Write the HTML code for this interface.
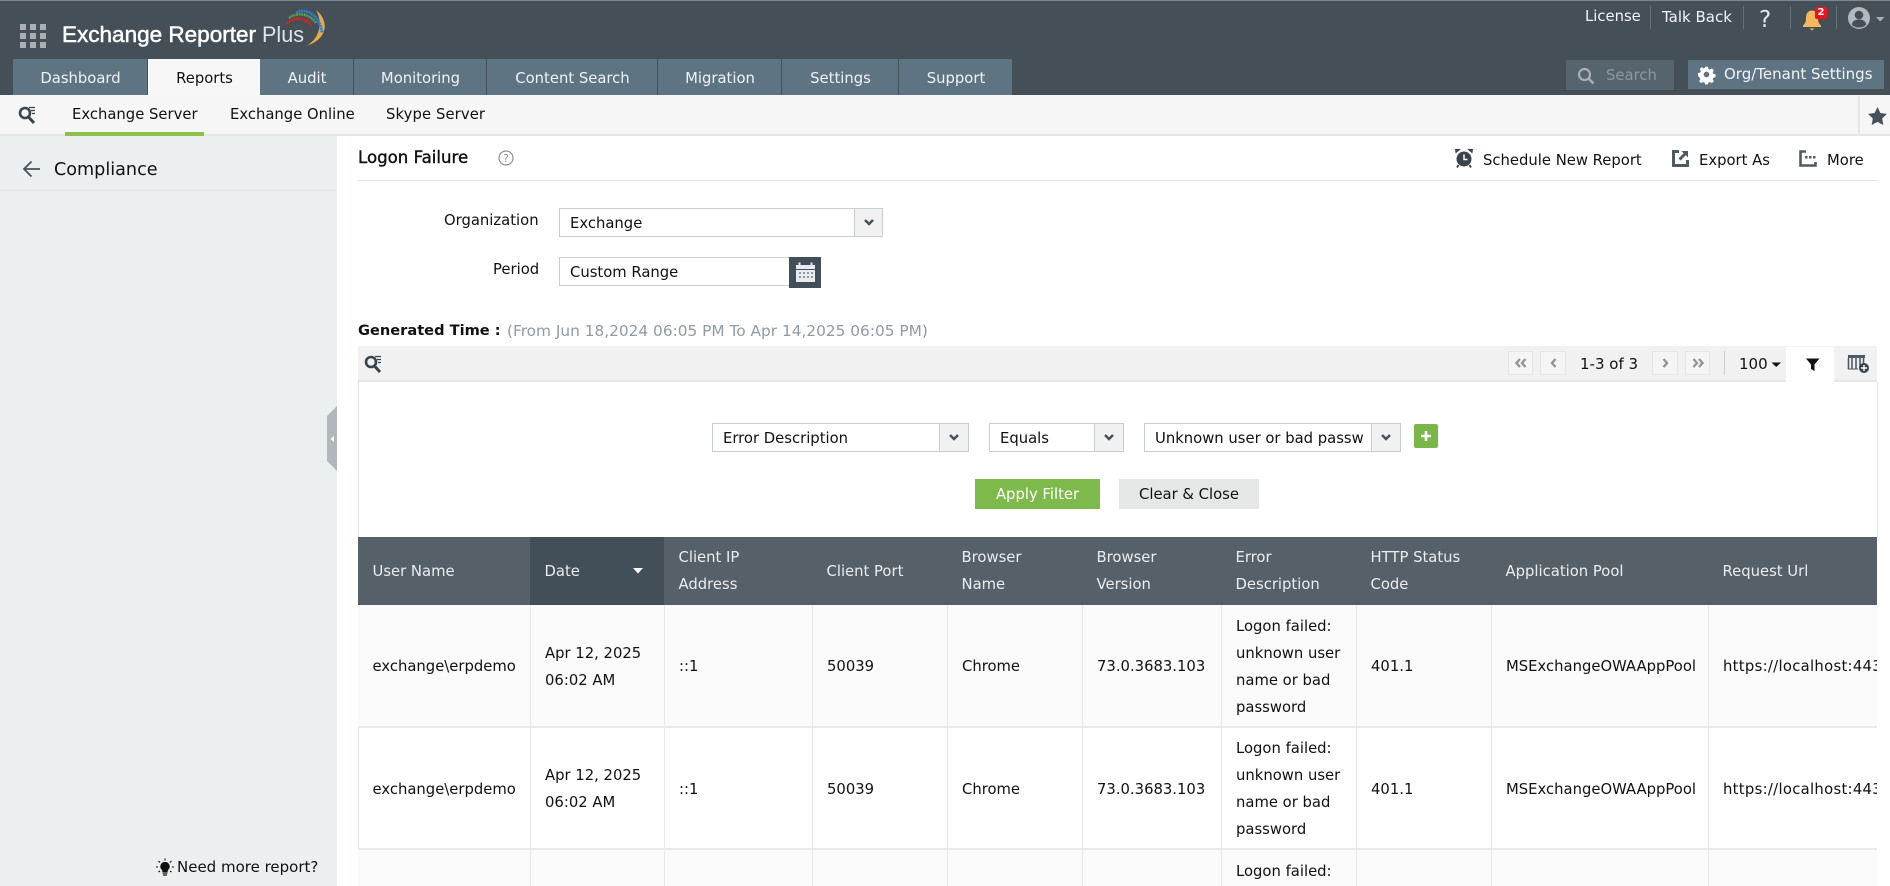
<!DOCTYPE html>
<html lang="en"><head><meta charset="utf-8"><title>Exchange Reporter Plus</title>
<style>
*{box-sizing:border-box}
html,body{margin:0;padding:0;width:1890px;height:886px;overflow:hidden;background:#fff}
body{position:relative;font-family:"DejaVu Sans","Liberation Sans",sans-serif;font-size:14.8px;color:#111}
.a{position:absolute}
.t{position:absolute;white-space:nowrap;line-height:20px;height:20px;margin-top:1px}
svg{position:absolute;overflow:visible}
.tab{position:absolute;top:59px;height:38px;background:#5f7482;color:#eef2f4;text-align:center;line-height:40px;padding-left:1px;border-right:1px solid #46525b}
.sel{position:absolute;background:#fff;border:1px solid #c9cdcf}
.sel span{position:absolute;left:10px;top:5px;line-height:20px;white-space:nowrap}
.sel i{position:absolute;right:0;top:0;bottom:0;background:#f1f1f1;border-left:1px solid #c9cdcf}
.sel i svg{left:50%;top:50%;margin:-4px 0 0 -5px}
.pg{position:absolute;top:351px;height:24px;background:#f5f5f5;border:1px solid #e6e6e6}
.pg svg{left:6px;top:6px}
.sep{position:absolute;width:1px;background:#66727a}
table{border-collapse:collapse;table-layout:fixed;width:1519px}
th{background:#566068;color:#e9edef;font-weight:normal;text-align:left;padding:0 6px 0 14.5px;height:68px;line-height:27px;vertical-align:middle}
th.on{background:#434f58}
td{height:122px;padding:2px 0 0 14.5px;line-height:27px;vertical-align:middle;border-right:1px solid #e9e9e9;border-bottom:2px solid #e8e8e8;white-space:nowrap;overflow:hidden;color:#111}
td.w{white-space:normal;padding-right:6px}
tr.o td{background:#fafafa}
tr.l td{height:37px;padding-top:8px;vertical-align:top;border-bottom:0}
.u{letter-spacing:.3px}
.btn{position:absolute;top:479px;height:30px;text-align:center;line-height:32px}
</style></head><body>

<!-- header -->
<div class="a" style="left:0;top:0;width:1890px;height:95px;background:#444f58;border-top:1px solid #7d868c"></div>
<svg style="left:0;top:0" width="340" height="60">
<g fill="#a9afb3">
<rect x="20" y="24" width="6" height="6"/><rect x="30" y="24" width="6" height="6"/><rect x="40" y="24" width="6" height="6"/>
<rect x="20" y="33" width="6" height="6"/><rect x="30" y="33" width="6" height="6"/><rect x="40" y="33" width="6" height="6"/>
<rect x="20" y="42" width="6" height="6"/><rect x="30" y="42" width="6" height="6"/><rect x="40" y="42" width="6" height="6"/>
</g>
<text x="62" y="42" font-family="'Liberation Sans',sans-serif" font-size="22" fill="#fff" stroke="#fff" stroke-width=".5" textLength="194" lengthAdjust="spacingAndGlyphs">Exchange Reporter</text>
<text x="262" y="42" font-family="'Liberation Sans',sans-serif" font-size="22" fill="#dfe3e5" textLength="42" lengthAdjust="spacingAndGlyphs">Plus</text>
<path d="M316 10C329 20 329 39 306 46C320 39 323 22 316 10Z" fill="#eaa94a"/>
<path d="M296 13C306 7 320 15 322 33" fill="none" stroke="#2f7fc6" stroke-width="3" stroke-dasharray="2 .6"/>
<path d="M289 18C297 12 309 13 316 23" fill="none" stroke="#5f9e4f" stroke-width="2.4" stroke-dasharray="2 .6"/>
<path d="M287 24C293 17 304 16 311 25" fill="none" stroke="#c8281e" stroke-width="3" stroke-dasharray="2 .6"/>
</svg>

<div class="tab" style="left:13px;width:135px">Dashboard</div>
<div class="tab" style="left:148px;width:112px;background:#f7f7f7;color:#111;border-right:0">Reports</div>
<div class="tab" style="left:260px;width:94px">Audit</div>
<div class="tab" style="left:354px;width:133px">Monitoring</div>
<div class="tab" style="left:487px;width:171px">Content Search</div>
<div class="tab" style="left:658px;width:124px">Migration</div>
<div class="tab" style="left:782px;width:117px">Settings</div>
<div class="tab" style="left:899px;width:113px;border-right:0">Support</div>

<div class="t" style="left:1585px;top:6px;color:#f1f4f5">License</div>
<div class="sep" style="left:1650px;top:6px;height:23px"></div>
<div class="t" style="left:1662px;top:6px;color:#f1f4f5;font-size:15px">Talk Back</div>
<div class="sep" style="left:1743px;top:6px;height:23px"></div>
<div class="t" style="left:1759px;top:9px;color:#e4e8ea;font-size:23px;line-height:20px">?</div>
<div class="sep" style="left:1790px;top:6px;height:23px"></div>
<svg style="left:1802px;top:9px" width="20" height="22"><path d="M1 16.5C3.5 14.5 4 12 4 8.5C4 4.500 6.5 1.5 10 1.5C13.500 1.500 16 4.500 16 8.500C16 12 16.500 14.500 19 16.500L19 18L1 18Z" fill="#f4b95c"/><path d="M7.500 19.500H12.500L10 21.500Z" fill="#f4b95c"/></svg>
<div class="a" style="left:1815px;top:7px;width:12px;height:12px;background:#f0101a;border-radius:2px;color:#fff;font-size:10px;font-weight:bold;line-height:12px;text-align:center">2</div>
<div class="sep" style="left:1836px;top:6px;height:23px"></div>
<svg style="left:1848px;top:7px" width="38" height="24"><circle cx="11" cy="11" r="11" fill="#b3b8bc"/><circle cx="11" cy="8" r="4.300" fill="#444f58"/><path d="M3.800 17.500C4.500 13.500 8 12.500 11 12.500C14 12.500 17.500 13.500 18.200 17.500C16 20 13.500 20.500 11 20.500C8.500 20.500 6 20 3.800 17.500Z" fill="#444f58"/><path d="M28 10H36.500L32.200 14.500Z" fill="#a9afb3"/></svg>

<div class="a" style="left:1566px;top:60px;width:108px;height:30px;background:#56646d"></div>
<svg style="left:1577px;top:67px" width="18" height="18"><circle cx="7.500" cy="7.500" r="5.500" fill="none" stroke="#a8b0b5" stroke-width="2.200"/><path d="M11.500 11.500L16.500 16.500" stroke="#a8b0b5" stroke-width="2.600"/></svg>
<div class="t" style="left:1606px;top:65px;color:#8d989f">Search</div>
<div class="a" style="left:1688px;top:60px;width:196px;height:29px;background:#5f7482"></div>
<svg style="left:1698px;top:66px" width="17" height="17" viewBox="0 0 24 24"><path fill="#fff" d="M10 1h4l.6 3.100 2.300 1 2.700-1.700 2.800 2.800-1.700 2.700 1 2.300 3.100.6v4l-3.100.6-1 2.300 1.700 2.700-2.800 2.800-2.700-1.700-2.300 1-.6 2.500h-4l-.6-2.500-2.300-1-2.700 1.700-2.800-2.800 1.700-2.700-1-2.300L0 14v-4l3.100-.6 1-2.300L2.400 4.400l2.800-2.800 2.700 1.700 2.300-1zM12 8a4 4 0 1 0 0 8 4 4 0 0 0 0-8z"/></svg>
<div class="t" style="left:1724px;top:63px;color:#f1f4f5;font-size:15px">Org/Tenant Settings</div>

<!-- sub nav -->
<div class="a" style="left:0;top:95px;width:1890px;height:41px;background:#f6f6f6;border-bottom:2px solid #e6e6e6"></div>
<div class="a" style="left:148px;top:95px;width:112px;height:2px;background:#f7f7f7"></div>
<svg style="left:18px;top:105px" width="20" height="20"><circle cx="7" cy="8" r="5" fill="none" stroke="#3a444c" stroke-width="2.600"/><path d="M10.500 12L16 18" stroke="#3a444c" stroke-width="3"/><path d="M11 2.500H17M13 5.500H17M14 8.500H17" stroke="#3a444c" stroke-width="1.200"/></svg>
<div class="t" style="left:72px;top:104px">Exchange Server</div>
<div class="a" style="left:65px;top:132px;width:139px;height:4px;background:#8cc04b"></div>
<div class="t" style="left:230px;top:104px">Exchange Online</div>
<div class="t" style="left:386px;top:104px;letter-spacing:.1px">Skype Server</div>
<div class="a" style="left:1858px;top:96px;width:2px;height:39px;background:#e6e6e6"></div>
<svg style="left:1868px;top:107px" width="19" height="18" viewBox="0 0 24 23"><path fill="#46525b" d="M12 0l3.700 7.600 8.300 1.200-6 5.900 1.400 8.300L12 19l-7.400 4L6 14.700 0 8.800l8.300-1.200z"/></svg>

<!-- sidebar -->
<div class="a" style="left:0;top:136px;width:337px;height:750px;background:#ebeff0"></div>
<div class="a" style="left:0;top:190px;width:337px;height:1px;background:#e1e5e6"></div>
<svg style="left:22px;top:160px" width="19" height="18"><path d="M18 9H2M9.500 1.500L2 9L9.500 16.500" fill="none" stroke="#46525b" stroke-width="1.800"/></svg>
<div class="t" style="left:54px;top:159px;font-size:17.600px">Compliance</div>
<svg style="left:327px;top:406px" width="10" height="65"><path d="M0 10L10 0V65L0 55Z" fill="#b0b8bd"/><path d="M7 30V36L3.500 33Z" fill="#fff"/></svg>
<svg style="left:156px;top:858px" width="18" height="18"><path d="M9 4A4.500 4.500 0 0 1 12 12L11.500 14H6.500L6 12A4.500 4.500 0 0 1 9 4Z" fill="#111"/><path d="M6.500 15H11.500M7 17H11" stroke="#111" stroke-width="1.200"/><path d="M9 .5V2.500M2.500 3L4 4.500M15.500 3L14 4.500M0 9H2M16 9H18M2.500 14L4 13M15.500 14L14 13" stroke="#111" stroke-width="1.100"/></svg>
<div class="t" style="left:177px;top:856px;font-size:15px">Need more report?</div>

<!-- title row -->
<div class="t" style="left:358px;top:147px;font-size:16.600px;color:#111;-webkit-text-stroke:.4px #111">Logon Failure</div>
<svg style="left:498px;top:150px" width="16" height="16"><circle cx="8" cy="8" r="7" fill="none" stroke="#8b9297" stroke-width="1.200"/><text x="8" y="12" text-anchor="middle" font-size="11" fill="#8b9297" font-family="'DejaVu Sans',sans-serif">?</text></svg>
<svg style="left:1454px;top:148px" width="20" height="20"><circle cx="10" cy="11" r="7.500" fill="#3a444c"/><path d="M2 4.500L5.500 1.500L1.500 1.500ZM18 4.500L14.500 1.500L18.500 1.500Z" fill="#3a444c" stroke="#3a444c"/><path d="M10 6.500V11.500H13.500" fill="none" stroke="#fff" stroke-width="1.500"/><path d="M4.500 17L3 19.500M15.500 17L17 19.500" stroke="#3a444c" stroke-width="1.800"/></svg>
<div class="t" style="left:1483px;top:150px">Schedule New Report</div>
<svg style="left:1672px;top:150px" width="17" height="17"><path d="M7 1.500H1.500V15.500H15.500V10" fill="none" stroke="#4f5b64" stroke-width="3"/><path d="M16 1H9.500L11.700 3.200L6.500 8.400L8.600 10.500L13.800 5.300L16 7.500Z" fill="#4f5b64"/></svg>
<div class="t" style="left:1699px;top:150px">Export As</div>
<svg style="left:1799px;top:150px" width="18" height="17"><path d="M7 1.500H1.500V15.500H16.500V12" fill="none" stroke="#4f5b64" stroke-width="2.600"/><path d="M6 6h2.500v2.500H6zM10 6h2.500v2.500H10zM14 6h2.500v2.500H14z" fill="#4f5b64"/></svg>
<div class="t" style="left:1827px;top:150px">More</div>
<div class="a" style="left:358px;top:180px;width:1519px;height:1px;background:#e5e5e5"></div>

<!-- form -->
<div class="t" style="left:444px;top:210px">Organization</div>
<div class="sel" style="left:559px;top:208px;width:324px;height:29px"><span>Exchange</span><i style="width:28px"><svg width="10" height="7"><path d="M1 1L5 5L9 1" fill="none" stroke="#46525b" stroke-width="2.500"/></svg></i></div>
<div class="t" style="left:493px;top:259px">Period</div>
<div class="sel" style="left:559px;top:257px;width:231px;height:29px"><span>Custom Range</span></div>
<div class="a" style="left:789px;top:257px;width:32px;height:31px;background:#434f58"></div>
<svg style="left:796px;top:262px" width="19" height="21"><path d="M0 3H19V20H0Z" fill="#e8ecee"/><path d="M0 7.500H19" stroke="#434f58"/><path d="M3.500 0.500V5M15.500 0.500V5" stroke="#e8ecee" stroke-width="2"/><g fill="#8d979e"><rect x="3" y="10" width="2" height="2"/><rect x="7" y="10" width="2" height="2"/><rect x="11" y="10" width="2" height="2"/><rect x="15" y="10" width="2" height="2"/><rect x="3" y="14" width="2" height="2"/><rect x="7" y="14" width="2" height="2"/><rect x="11" y="14" width="2" height="2"/><rect x="15" y="14" width="2" height="2"/></g></svg>
<div class="t" style="left:358px;top:320px;font-weight:bold;font-size:14.600px;color:#111">Generated Time :</div>
<div class="t" style="left:507px;top:320px;color:#8f9ba3;font-size:15.350px">(From Jun 18,2024 06:05 PM To Apr 14,2025 06:05 PM)</div>

<!-- toolbar + filter panel -->
<div class="a" style="left:358px;top:346px;width:1519px;height:36px;background:#f1f1f1;border-bottom:2px solid #e6e6e6"></div>
<div class="a" style="left:358px;top:382px;width:1px;height:504px;background:#e5e5e5"></div>
<div class="a" style="left:1877px;top:382px;width:1px;height:155px;background:#e5e5e5"></div>
<svg style="left:364px;top:354px" width="20" height="20"><circle cx="7" cy="8" r="5" fill="none" stroke="#3a444c" stroke-width="2.600"/><path d="M10.500 12L16 18" stroke="#3a444c" stroke-width="3"/><path d="M11 2.500H17M13 5.500H17M14 8.500H17" stroke="#3a444c" stroke-width="1.200"/></svg>
<div class="pg" style="left:1508px;width:25px"><svg width="12" height="10"><path d="M5 1L1.500 5L5 9M10.500 1L7 5L10.500 9" fill="none" stroke="#8f959a" stroke-width="2.400"/></svg></div>
<div class="pg" style="left:1540px;width:26px"><svg style="left:9px" width="7" height="10"><path d="M5.500 1L2 5L5.500 9" fill="none" stroke="#8f959a" stroke-width="2.400"/></svg></div>
<div class="t" style="left:1580px;top:353px;font-size:15px">1-3 of 3</div>
<div class="pg" style="left:1652px;width:26px"><svg style="left:9px" width="7" height="10"><path d="M1.500 1L5 5L1.500 9" fill="none" stroke="#8f959a" stroke-width="2.400"/></svg></div>
<div class="pg" style="left:1685px;width:25px"><svg width="12" height="10"><path d="M1.500 1L5 5L1.500 9M7 1L10.500 5L7 9" fill="none" stroke="#8f959a" stroke-width="2.400"/></svg></div>
<div class="a" style="left:1724px;top:351px;width:1px;height:24px;background:#cfcfcf"></div>
<div class="t" style="left:1739px;top:353px;font-size:15px">100</div>
<svg style="left:1771px;top:362px" width="11" height="6"><path d="M0.500 0.500H10L5.200 5Z" fill="#111"/></svg>
<div class="a" style="left:1786px;top:347px;width:48px;height:35px;background:#fff"></div>
<svg style="left:1806px;top:358px" width="14" height="14"><path d="M0 0.500H13.500L8.500 6.500V13L5 11V6.500Z" fill="#111"/></svg>
<svg style="left:1847px;top:354px" width="23" height="20"><path d="M1 1H18V4H1Z" fill="#4f5b64"/><path d="M1.500 4V15M5 4V15M9 4V15M13 4V15M16.500 4V10" stroke="#4f5b64" stroke-width="1.600"/><path d="M1 15H11" stroke="#4f5b64"/><circle cx="17" cy="14" r="5" fill="#3a444c"/><path d="M14 14H20M17 11V17" stroke="#fff" stroke-width="1.400"/></svg>

<div class="sel" style="left:712px;top:423px;width:257px;height:29px"><span>Error Description</span><i style="width:29px"><svg width="10" height="7"><path d="M1 1L5 5L9 1" fill="none" stroke="#46525b" stroke-width="2.500"/></svg></i></div>
<div class="sel" style="left:989px;top:423px;width:135px;height:29px"><span>Equals</span><i style="width:29px"><svg width="10" height="7"><path d="M1 1L5 5L9 1" fill="none" stroke="#46525b" stroke-width="2.500"/></svg></i></div>
<div class="sel" style="left:1144px;top:423px;width:257px;height:29px;overflow:hidden"><span style="width:209px;overflow:hidden">Unknown user or bad password</span><i style="width:29px"><svg width="10" height="7"><path d="M1 1L5 5L9 1" fill="none" stroke="#46525b" stroke-width="2.500"/></svg></i></div>
<div class="a" style="left:1414px;top:424px;width:24px;height:24px;background:#7ab648;border-radius:2px"></div>
<svg style="left:1420px;top:430px" width="12" height="12"><path d="M6 1V11M1 6H11" stroke="#fff" stroke-width="2.600"/></svg>
<div class="btn" style="left:975px;width:125px;background:#7dba4b;color:#fff">Apply Filter</div>
<div class="btn" style="left:1119px;width:140px;background:#e5e6e6;color:#111">Clear &amp; Close</div>

<!-- table -->
<div class="a" style="left:358px;top:537px;width:1519px;height:349px;overflow:hidden">
<table>
<colgroup><col style="width:172px"><col style="width:134px"><col style="width:148px"><col style="width:135px"><col style="width:135px"><col style="width:139px"><col style="width:135px"><col style="width:135px"><col style="width:217px"><col style="width:169px"></colgroup>
<tr><th>User Name</th><th class="on" style="position:relative">Date<svg style="right:21px;top:31px" width="10" height="6"><path d="M0 0H10L5 5.500Z" fill="#fff"/></svg></th><th>Client IP<br>Address</th><th>Client Port</th><th>Browser<br>Name</th><th>Browser<br>Version</th><th>Error<br>Description</th><th>HTTP Status<br>Code</th><th>Application Pool</th><th>Request Url</th></tr>
<tr class="o"><td>exchange\erpdemo</td><td>Apr 12, 2025<br>06:02 AM</td><td>::1</td><td>50039</td><td>Chrome</td><td>73.0.3683.103</td><td class="w">Logon failed: unknown user name or bad password</td><td>401.1</td><td>MSExchangeOWAAppPool</td><td><span class="u">https://localhost:443/owa</span></td></tr>
<tr><td>exchange\erpdemo</td><td>Apr 12, 2025<br>06:02 AM</td><td>::1</td><td>50039</td><td>Chrome</td><td>73.0.3683.103</td><td class="w">Logon failed: unknown user name or bad password</td><td>401.1</td><td>MSExchangeOWAAppPool</td><td><span class="u">https://localhost:443/owa</span></td></tr>
<tr class="o l"><td></td><td></td><td></td><td></td><td></td><td></td><td class="w">Logon failed:</td><td></td><td></td><td></td></tr>
</table>
</div>
</body></html>
